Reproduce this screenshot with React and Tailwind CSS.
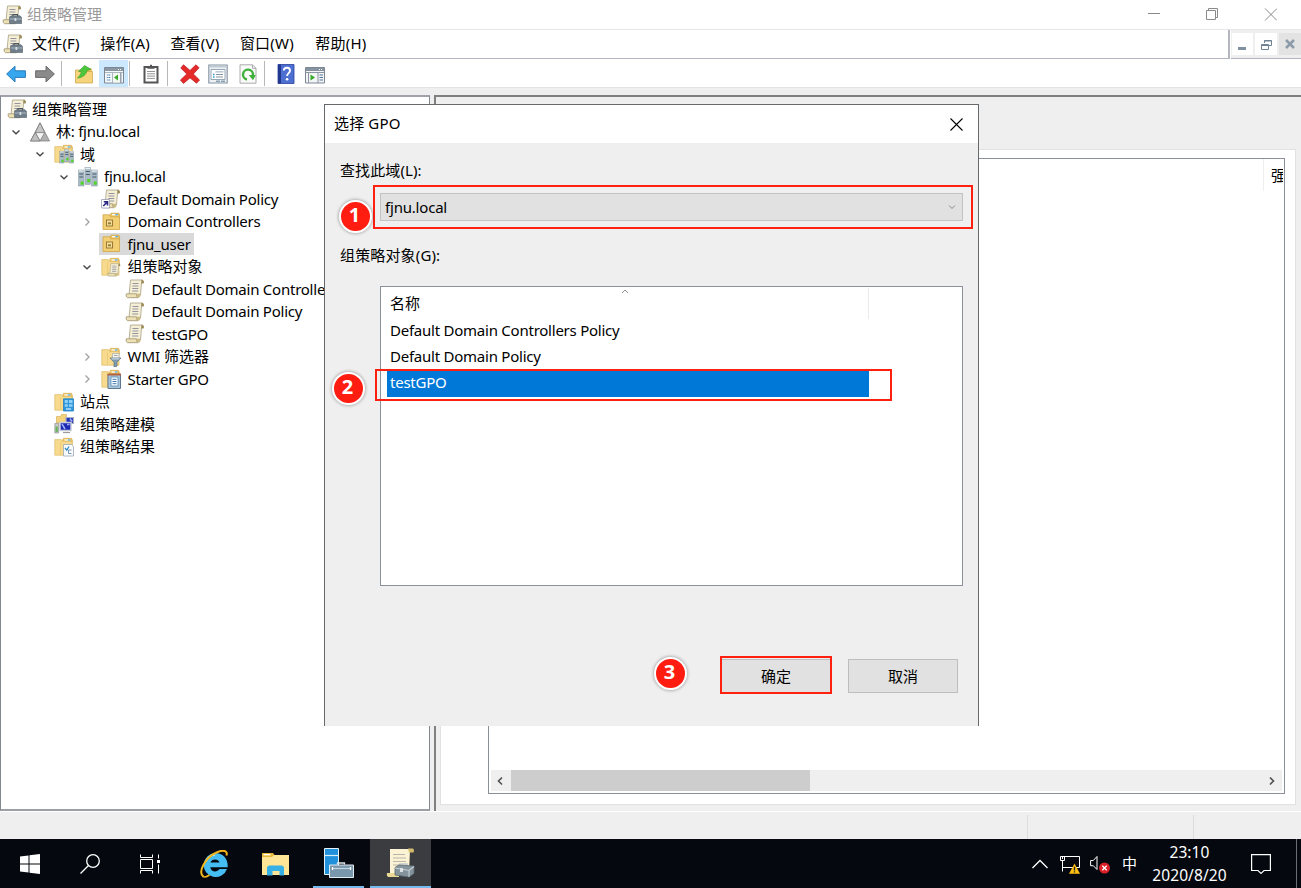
import React from 'react';

/* ---------- ICONS ---------- */

function ScrollShape() {
  return (
    <g>
      <path d="M5.500 1H16.500c1.800 0 2.300 1.200 2 3h-2L15.500 16H4z" fill="#f5efd6" stroke="#b0a88e" strokeWidth=".9" />
      <path d="M16.500.8c1.900 0 2.500 1.400 2.200 3.400h-2.500c0-1.400 0-2.400.3-3.400z" fill="#9c8a56" />
      <path d="M1.300 14.800h10.200c-.4 1.600.2 3.300 1.600 3.900H2.600c-1.400-.6-1.700-2.300-1.300-3.900z" fill="#ece0b4" stroke="#a89c78" strokeWidth=".9" />
      <path d="M11.500 14.800c-.4 1.600.2 3.400 1.600 3.900 2 0 2.400-1.400 2.600-3.900z" fill="#c9ba86" />
      <path d="M7.500 4.500h6M7.400 7h6M7.300 9.500h6M7.200 12h6" stroke="#96939f" strokeWidth="1.100" />
    </g>
  );
}

function FolderShape() {
  return (
    <g>
      <path d="M8.500 3.500l1-2.200h8l.8 2v4H8.500z" fill="#efc35c" stroke="#d3a544" strokeWidth=".6" />
      <path d="M10.500 2.300h6v1.300h-6z" fill="#fff" />
      <path d="M13.800 2.300h2.700v1.300h-2.700z" fill="#56aee0" />
      <path d="M.8 2.600h6.500l1.400 1.900H18v13.700H.8z" fill="#f7da8e" stroke="#e0bd69" strokeWidth=".7" />
      <path d="M6.500 5.500v12.400" stroke="#e8c674" strokeWidth=".8" />
    </g>
  );
}

function Servers() {
  return (
    <g>
      {[[0.4, 3, 16], [13.6, 3, 16], [7, 0.5, 17]].map(([x, y, h]) => (
        <g key={x}>
          <rect x={x} y={y} width="5.600" height={h} fill="#a9bbc6" stroke="#8496a2" strokeWidth=".5" />
          <path d={`M${x + 0.3} ${y + 1}h5`} stroke="#e4edf2" strokeWidth="1.300" />
          <path d={`M${x + 0.8} ${y + 4}h4M${x + 0.8} ${y + 7}h4`} stroke="#4b5c69" strokeWidth="1.200" />
          <rect x={x + 2.2} y={y + 11.500} width="3" height="3.200" fill="#4fd626" />
        </g>
      ))}
    </g>
  );
}

function Icon({ name, className = 'w-5 h-5' }) {
  return (
    <svg viewBox="0 0 20 20" className={`shrink-0 ${className}`} fill="none">
      {name === 'gpm' && (
        <g>
          <ScrollShape />
          <path d="M11 11.300V9.500h4.500v1.800" stroke="#4c545c" strokeWidth="1.200" />
          <path d="M7.500 12.200l2-1.400h8.500l1.700 1.700v6H7.500z" fill="#6f7e8a" stroke="#56616b" strokeWidth=".6" />
          <path d="M7.800 14h11.700" stroke="#b4c2cc" strokeWidth=".9" />
          <path d="M12.500 13h1.800v3h-1.800z" fill="#d5dce0" />
        </g>
      )}
      {name === 'gpo' && <ScrollShape />}
      {name === 'link' && (
        <g>
          <ScrollShape />
          <path d="M.5 10.500h8v8.500h-8z" fill="#fff" stroke="#9a9ab4" strokeWidth=".8" />
          <path d="M2.300 17l3.600-3.800M2.800 12.700h3.700v3.800" stroke="#2a2484" strokeWidth="1.600" />
        </g>
      )}
      {name === 'forest' && (
        <g stroke="#777" strokeWidth=".7" strokeLinejoin="round">
          <path d="M10 .8L19.500 19H.5z" fill="#b0b0b0" />
          <path d="M10 .8l4.700 9.800H5.300z" fill="#c6c6c6" />
          <path d="M5.300 10.600h9.400L10 19z" fill="#f4f4f4" />
          <path d="M5.300 10.600L10 19H.5z" fill="#c0c0c0" />
        </g>
      )}
      {name === 'servers' && <Servers />}
      {name === 'domains' && (
        <g>
          <FolderShape />
          <g transform="translate(5.500 5) scale(.74)"><Servers /></g>
        </g>
      )}
      {name === 'ou' && (
        <g>
          <path d="M9 3.500l1-2.300h8l.6 2v3H9z" fill="#eec460" stroke="#c99f3e" strokeWidth=".7" />
          <path d="M11 2h6v1.300h-6z" fill="#fff" />
          <path d="M14.300 2H17v1.300h-2.700z" fill="#56aee0" />
          <path d="M2 2.800h6.500l1.200 2h8.800v12.700H2z" fill="#f3cf74" stroke="#cfa548" strokeWidth=".8" />
          <path d="M5.500 8h6v6h-6z" fill="#f8e3a2" stroke="#9b7a35" strokeWidth="1.100" />
          <path d="M7 10.300h3v2H7z" fill="#9b7a35" />
        </g>
      )}
      {name === 'gpofolder' && (
        <g>
          <FolderShape />
          <g transform="translate(6 6) scale(.7)"><ScrollShape /></g>
        </g>
      )}
      {name === 'wmi' && (
        <g>
          <FolderShape />
          <path d="M11.500 6.500h6.500v5h-6.500z" fill="#f4f2ec" stroke="#aaa" strokeWidth=".7" />
          <path d="M13 8.500h3.500" stroke="#8f8c96" strokeWidth=".8" />
          <path d="M9 11h11l-4 4.200v4l-3 .8v-4.800z" fill="#7f9bb2" stroke="#5b7180" strokeWidth=".7" />
          <path d="M10.500 11.900h8" stroke="#dbe8f0" strokeWidth="1" />
        </g>
      )}
      {name === 'starter' && (
        <g>
          <FolderShape />
          <path d="M7 5.500h12.500v14H7z" fill="#a9c4d8" stroke="#5e7891" strokeWidth="1" />
          <path d="M6.500 4.500h13.500v2H6.500z" fill="#b3603f" />
          <path d="M10 8h7v9h-7z" fill="#fff" stroke="#5d92bd" strokeWidth=".9" />
          <path d="M11.500 10.300h4M11.500 12.500h4M11.500 14.700h4" stroke="#3e75ad" strokeWidth="1" />
        </g>
      )}
      {name === 'sites' && (
        <g>
          <FolderShape />
          <path d="M9.500 6.800h10V19h-10z" fill="#2f98dd" stroke="#1f7fc4" strokeWidth=".8" />
          <path d="M10.800 8h3v3h-3zM15 8h3.500v3H15zM10.800 12.200h3v2.600h-3zM15 12.200h3.500v2.600H15z" fill="#8fd0f6" />
          <path d="M12 17h5" stroke="#d7effc" strokeWidth="1.200" />
        </g>
      )}
      {name === 'modeling' && (
        <g>
          <path d="M2.500 2.500h4l1-2h5V9h-10z" fill="#f3d27b" stroke="#d0a94e" strokeWidth=".6" />
          <path d="M12 3.500h7.500v6H12z" fill="#2633b8" stroke="#a9b0c4" strokeWidth="1.200" />
          <path d="M6 8.500h11v8H6z" fill="#1c29b5" stroke="#c8cddb" strokeWidth="1.500" />
          <path d="M8 10l3 5M13 10.500h2.500M16 4.500l2 3" stroke="#9fb0f4" strokeWidth="1.500" />
          <path d="M9 18.500h7" stroke="#999" strokeWidth="1.200" />
          <path d="M.8 9.500h3.700V19H.8z" fill="#c5c9cb" stroke="#888" strokeWidth=".6" />
          <path d="M1.500 12.500h2.300V18H1.500z" fill="#6ab45a" />
        </g>
      )}
      {name === 'results' && (
        <g>
          <FolderShape />
          <path d="M9.500 7.500h8l2 2V19h-10z" fill="#fcfcff" stroke="#9aa8b8" strokeWidth=".8" />
          <path d="M11 11l1.800 2.200L15 9.500" stroke="#2d8cc4" strokeWidth="1.300" />
          <path d="M14.500 13h3M14.500 13v3.500h3" stroke="#6d98b5" strokeWidth="1" />
        </g>
      )}
      {name === 'back' && (
        <path d="M.6 10L9 2.200v4.600h10.400v6.600H9V18z" fill="#36a6ee" stroke="#2a7cb9" strokeWidth="1" strokeLinejoin="round" />
      )}
      {name === 'forward' && (
        <path d="M19.400 10L11 2.200v4.600H.6v6.600H11V18z" fill="#8b8b8b" stroke="#6b6b6b" strokeWidth="1" strokeLinejoin="round" />
      )}
      {name === 'up' && (
        <g>
          <path d="M10 4.500h8v4h-8z" fill="#edc563" />
          <path d="M1.500 6h7l1 1.500h9V19h-17z" fill="#f5d47c" stroke="#cda94f" strokeWidth=".8" />
          <path d="M3.500 14c2.200-1.800 3.500-4 3.800-6.500H4.500L10.500 1.500l6.500 3.800-4 1.200c-.7 4-4.200 7.300-9.500 7.500z" fill="#4cc63a" stroke="#379b2c" strokeWidth=".6" />
        </g>
      )}
      {name === 'pane-left' && (
        <g>
          <path d="M.5 2.500h19v15.500H.5z" fill="#f6f9fb" stroke="#7c8792" />
          <path d="M1 3h18v3H1z" fill="#8a97a4" />
          <path d="M14 4.500h1M16 4.500h1" stroke="#fff" strokeWidth="1" />
          <path d="M1 7.500h18M8.500 8v10" stroke="#98a3ad" strokeWidth=".8" />
          <path d="M2.800 10h3.500M2.800 12.500h3.500M2.800 15h3.500" stroke="#4c81ae" strokeWidth="1.100" strokeDasharray="1 .6 2" />
          <path d="M9 8h7v9.500H9z" fill="#f3f9f0" />
          <path d="M14 9.500v6l-4-3z" fill="#38a928" />
          <path d="M16.800 7.800v10" stroke="#8f9aa5" strokeWidth="1.400" />
        </g>
      )}
      {name === 'pane-right' && (
        <g>
          <path d="M.5 2.500h19v15.500H.5z" fill="#f2f4f5" stroke="#7c8792" />
          <path d="M1 3h18v3H1z" fill="#8793a0" />
          <path d="M14 4.500h1M16 4.500h1" stroke="#fff" strokeWidth="1" />
          <path d="M1 7.500h18M3.500 8v10M13 8v10" stroke="#7f8b97" strokeWidth=".9" />
          <path d="M5.500 9.500v6l4.500-3z" fill="#38a928" />
          <path d="M14.500 10h3.500M14.500 12.500h3.500M14.500 15h3.500" stroke="#52779c" strokeWidth="1.200" />
        </g>
      )}
      {name === 'clipboard' && (
        <g>
          <path d="M3.500 3h13v15.500h-13z" fill="#fff" stroke="#555" strokeWidth="2" />
          <path d="M6.500 2h2.300l.4-1.200h1.600l.4 1.200h2.300v2.800h-7z" fill="#555" />
          <path d="M6 7.500h8M6 9.800h8M6 12.100h8M6 14.400h8" stroke="#888" strokeWidth=".9" />
        </g>
      )}
      {name === 'delete' && (
        <path d="M3.500.8L10 6.500 16 .8l3 3L13.300 10l6.200 6-3 3.200-6.500-5.400-6.500 5.600-3-3.400L6.800 10 .8 4z" fill="#e52a2a" stroke="#c21c1c" strokeWidth=".8" strokeLinejoin="round" />
      )}
      {name === 'properties' && (
        <g>
          <path d="M.8 1h18.400v18H.8z" fill="#eef2f5" stroke="#8292a1" strokeWidth="1.100" />
          <path d="M1.500 2.800h17" stroke="#c3ccd4" strokeWidth="1.600" />
          <path d="M3 5.500h14v10H3z" fill="#fff" stroke="#7e92a5" strokeWidth=".8" />
          <path d="M7.500 7h8v1.600h-8z" fill="#bccad6" />
          <path d="M5 10.500h1.500M5 13h1.500" stroke="#2e9bc8" strokeWidth="1.300" />
          <path d="M8 10.500h7M8 13h7" stroke="#8493a0" strokeWidth="1" />
          <path d="M8 17.300h4M13 17.300h4" stroke="#8ba0b1" strokeWidth="1.500" />
        </g>
      )}
      {name === 'refresh' && (
        <g>
          <path d="M2 .8h12.500L18 4.300v14.900H2z" fill="#fafafa" stroke="#a3a3a3" strokeWidth=".9" />
          <path d="M14.500.8v3.500H18" stroke="#a3a3a3" strokeWidth=".9" />
          <path d="M9 15.500A5 5 0 1 1 15 11" stroke="#3fb03b" strokeWidth="2.400" />
          <path d="M17.800 11h-7l4.200 5.200z" fill="#3fb03b" />
        </g>
      )}
      {name === 'help' && (
        <g>
          <path d="M2 .5h16v19H2z" fill="#4d6fd2" stroke="#27409a" strokeWidth=".8" />
          <path d="M2 .5h3v19H2z" fill="#22388f" />
          <path d="M7.800 6.500c.2-3.800 6.300-3.500 6.200.2 0 2.400-2.900 2.500-2.900 5.300" stroke="#fff" strokeWidth="1.900" />
          <circle cx="11.100" cy="15.200" r="1.300" fill="#fff" />
        </g>
      )}
    </svg>
  );
}

function Chevron({ open }) {
  return (
    <svg viewBox="0 0 10 10" className="w-2.5 h-2.5" fill="none">
      {open ? (
        <path d="M1.500 3.500L5 6.800l3.500-3.300" stroke="#444" strokeWidth="1.300" />
      ) : (
        <path d="M3.500 1.500L7 5 3.500 8.500" stroke="#a0a0a0" strokeWidth="1.300" />
      )}
    </svg>
  );
}

/* ---------- TREE ---------- */

const indents = ['pl-[6px]', 'pl-[5px]', 'pl-[29px]', 'pl-[53px]', 'pl-[76px]', 'pl-[100px]'];

const tree = [
  { level: 0, icon: 'gpm', text: '组策略管理', cjk: true },
  { level: 1, icon: 'forest', text: '林: fjnu.local', open: true },
  { level: 2, icon: 'domains', text: '域', open: true, cjk: true },
  { level: 3, icon: 'servers', text: 'fjnu.local', open: true },
  { level: 4, icon: 'link', text: 'Default Domain Policy' },
  { level: 4, icon: 'ou', text: 'Domain Controllers', open: false },
  { level: 4, icon: 'ou', text: 'fjnu_user', selected: true },
  { level: 4, icon: 'gpofolder', text: '组策略对象', open: true, cjk: true },
  { level: 5, icon: 'gpo', text: 'Default Domain Controllers Policy' },
  { level: 5, icon: 'gpo', text: 'Default Domain Policy' },
  { level: 5, icon: 'gpo', text: 'testGPO' },
  { level: 4, icon: 'wmi', text: 'WMI 筛选器', open: false, cjk: true },
  { level: 4, icon: 'starter', text: 'Starter GPO', open: false },
  { level: 2, icon: 'sites', text: '站点', cjk: true },
  { level: 2, icon: 'modeling', text: '组策略建模', cjk: true },
  { level: 2, icon: 'results', text: '组策略结果', cjk: true },
];

function TreeRow({ item }) {
  return (
    <div className={`flex items-center h-[22.53px] ${indents[item.level]}`}>
      {item.level > 0 && (
        <div className="w-6 pl-[5px] shrink-0">{item.open !== undefined && <Chevron open={item.open} />}</div>
      )}
      <div
        className={`flex items-center h-[22px] pr-[3px] -ml-0.5 pl-0.5 ${item.level > 3 ? 'gap-[6.500px]' : item.level ? 'gap-1.5' : 'gap-[5px]'} ${item.selected ? 'bg-[#d9d9d9]' : ''}`}
      >
        <Icon name={item.icon} />
        <span className={`whitespace-nowrap pb-px ${item.cjk ? 'tracking-normal' : 'tracking-[-0.24px]'}`}>{item.text}</span>
      </div>
    </div>
  );
}

/* ---------- TOP BARS ---------- */

function TitleBar() {
  return (
    <div className="h-[30px] flex items-center border-b border-[#e5e5e5] pl-[2px] pr-[24px] text-[#999] tracking-normal">
      <Icon name="gpm" />
      <span className="ml-[5px] pb-0.5">组策略管理</span>
      <svg viewBox="0 0 130 14" className="ml-auto w-[130px] h-3.5 mb-px" fill="none" stroke="#8a8a8a">
        <path d="M1 6.500h12M59.500 3.500h9v9h-9zM61.500 3.500v-2h9v9h-2M118 1.500l12 12M130 1.500l-12 12" />
      </svg>
    </div>
  );
}

function MenuBar() {
  return (
    <div className="h-[29px] flex">
      <div className="flex-1 flex items-center gap-[20.5px] pl-[3px] border-b border-r-2 border-[#b3b6c0] tracking-[0.2px]">
        <div className="flex items-center gap-[9px]">
          <Icon name="gpm" />
          <span className="pb-0.5">文件(F)</span>
        </div>
        <span className="pb-0.5">操作(A)</span>
        <span className="pb-0.5">查看(V)</span>
        <span className="pb-0.5">窗口(W)</span>
        <span className="pb-0.5 ml-px">帮助(H)</span>
      </div>
      <div className="w-[70px] ml-px border-b border-[#b3b6c0] flex pt-[3px] pb-[3px] bg-[#efefef] gap-0.5 pl-px">
        <div className="w-[21px] bg-white flex justify-center">
          <div className="w-2 h-[3px] bg-[#8090a0] mt-3.5 mr-0.5" />
        </div>
        <div className="w-[22px] bg-white flex justify-center items-center">
          <svg viewBox="0 0 11 11" className="w-[11px] h-[11px]" fill="none" stroke="#718494">
            <path d="M3.500 4V1.500h7v5H8M3 2h8M.5 5.500h7v5h-7zM0 6.500h8" />
          </svg>
        </div>
        <div className="flex-1 bg-[#e3e3e3] flex justify-center items-center">
          <svg viewBox="0 0 10 10" className="w-2.5 h-2.5" fill="none" stroke="#8b9baa" strokeWidth="2.500">
            <path d="M1 1l8 8M9 1L1 9" />
          </svg>
        </div>
      </div>
    </div>
  );
}

function Divider({ className }) {
  return <div className={`w-px h-[25px] bg-[#b8b8b8] ${className}`} />;
}

function Toolbar() {
  return (
    <div className="h-[29px] flex items-center border-b border-[#e3e3e3] pl-1.5 pt-px">
      <Icon name="back" />
      <Icon name="forward" className="w-5 h-5 ml-[9px]" />
      <Divider className="ml-1.5" />
      <Icon name="up" className="w-5 h-5 ml-3" />
      <div className="w-[29px] h-[27px] ml-[5px] bg-[#cce8ff] flex items-center justify-center">
        <Icon name="pane-left" className="w-5 h-5 mt-0.5" />
      </div>
      <Divider className="ml-px" />
      <Icon name="clipboard" className="w-5 h-5 ml-[11px]" />
      <Divider className="ml-1.5" />
      <Icon name="delete" className="w-5 h-5 ml-3" />
      <Icon name="properties" className="w-5 h-5 ml-2" />
      <Icon name="refresh" className="w-5 h-5 ml-2.5" />
      <Divider className="ml-1.5" />
      <Icon name="help" className="w-5 h-5 ml-[11px]" />
      <Icon name="pane-right" className="w-5 h-5 ml-[9px] mt-0.5" />
    </div>
  );
}

/* ---------- RIGHT PANEL ---------- */

function ContentPanel() {
  return (
    <div className="flex-1 border-t-2 border-l-2 border-[#808080] ml-1 pt-[52px] pl-1 pr-[5px] pb-1.5 bg-[#efefef]">
      <div className="h-full bg-white border border-[#e1e1e1] pt-2 pl-[47px] pr-2.5 pb-2.5">
        <div className="h-full border border-[#8b8f98] flex flex-col overflow-hidden">
          <div className="h-8 flex justify-end">
            <div className="w-[21px] border-l border-[#efefef] pl-[7px] pt-[6px] pr-px">
              <div className="overflow-hidden whitespace-nowrap">强</div>
            </div>
          </div>
          <div className="flex-1" />
          <div className="h-[21px] mb-0.5 mx-0.5 flex items-center bg-[#efefef]">
            <div className="w-5 flex justify-center">
              <svg viewBox="0 0 10 10" className="w-2.5 h-2.5 mr-0.5" fill="none" stroke="#505050" strokeWidth="1.600">
                <path d="M7 1.500L3.500 5 7 8.500" />
              </svg>
            </div>
            <div className="w-[299px] h-full bg-[#cdcdcd]" />
            <div className="ml-auto w-[21px] flex justify-center">
              <svg viewBox="0 0 10 10" className="w-2.5 h-2.5" fill="none" stroke="#505050" strokeWidth="1.600">
                <path d="M3 1.500L6.500 5 3 8.500" />
              </svg>
            </div>
          </div>
        </div>
      </div>
    </div>
  );
}

/* ---------- DIALOG ---------- */

function Dialog() {
  return (
    <div className="absolute left-[324px] top-[104px] w-[655px] h-[622px] border border-b-0 border-[#66696c] bg-[#efefef]">
      <div className="h-[38px] bg-white flex items-center justify-between pl-[9px] pr-[15px]">
        <span className="pb-0.5 tracking-[0.15px]">选择 GPO</span>
        <svg viewBox="0 0 13 13" className="w-[13px] h-[13px]" stroke="#000" strokeWidth="1.100">
          <path d="M.5.5l12 12M12.500.5l-12 12" />
        </svg>
      </div>
      <div className="pl-[15px] pr-[15px] pt-[17px]">
        <div className="h-5 leading-5 tracking-[0.1px]">查找此域(L):</div>
        <div className="ml-10 mt-[13px] h-[28px] border border-[#c3c3c3] bg-[#e1e1e1] flex items-center justify-between pl-1 pr-1.5">
          <span>fjnu.local</span>
          <svg viewBox="0 0 8 8" className="w-2 h-2" fill="none" stroke="#888">
            <path d="M1 2.500l3 3 3-3" />
          </svg>
        </div>
        <div className="h-5 leading-5 mt-6 tracking-[0.15px]">组策略对象(G):</div>
        <div className="ml-10 mt-[21px] h-[300px] border border-[#8b9199] bg-white pt-px pl-1.5">
          <div className="h-[30.5px] w-[482px] border-r border-[#ebebeb] flex items-center pl-[3px] pb-px relative tracking-normal">
            名称
            <svg viewBox="0 0 8 5" className="absolute left-[234px] top-px w-2 h-[5px]" fill="none" stroke="#909090">
              <path d="M1 4l3-3 3 3" />
            </svg>
          </div>
          {['Default Domain Controllers Policy', 'Default Domain Policy', 'testGPO'].map((name) => (
            <div
              key={name}
              className={`h-[26.2px] w-[482px] flex items-center pl-[3px] pb-[3px] tracking-[-0.24px] ${name === 'testGPO' ? 'bg-[#0078d7] text-white' : ''}`}
            >
              {name}
            </div>
          ))}
        </div>
        <div className="flex justify-end gap-[17px] mt-[73px] pr-[5px] tracking-normal">
          <div className="w-[110px] h-[34px] border border-[#bdbdbd] bg-[#e1e1e1] flex items-center justify-center">确定</div>
          <div className="w-[110px] h-[34px] border border-[#bdbdbd] bg-[#e1e1e1] flex items-center justify-center">取消</div>
        </div>
      </div>
    </div>
  );
}

function StepBadge({ n, className }) {
  return (
    <div
      className={`absolute w-[33px] h-[33px] rounded-full border-2 border-white bg-[#ff1d12] shadow-[0_0_3px_1px_rgba(0,0,0,0.25)] text-white font-bold text-[20px] leading-[26px] text-center tracking-normal pr-0.5 ${className}`}
    >
      {n}
    </div>
  );
}

/* ---------- TASKBAR ---------- */

function Taskbar() {
  return (
    <div className="h-[49px] bg-[#05090f] text-white flex items-stretch">
      <div className="w-[60px] flex items-center justify-center">
        <svg viewBox="0 0 20 20" className="w-5 h-5" fill="#fff">
          <path d="M0 2.600l8.500-1.200V9.500H0zM9.500 1.200L20 0v9.500H9.500zM0 10.500h8.500v8.100L0 17.400zM9.500 10.500H20V20L9.500 18.800z" />
        </svg>
      </div>
      <div className="w-[60px] flex items-center justify-center">
        <svg viewBox="0 0 20 20" className="w-5 h-5" fill="none" stroke="#fff" strokeWidth="1.300">
          <circle cx="13" cy="7" r="6.300" />
          <path d="M8.500 11.500L.5 19.500" />
        </svg>
      </div>
      <div className="w-[60px] flex items-center justify-center">
        <svg viewBox="0 0 20 20" className="w-5 h-5" fill="none" stroke="#fff">
          <path d="M.5.500v3h12v-3M.5 19.500v-3h12v3M.5 5.500h12v9H.5zM18.500.500v4M18.500 10.500v9" />
          <path d="M17 6h3v3h-3z" fill="#fff" stroke="none" />
        </svg>
      </div>
      <div className="w-[67px] flex items-center justify-center">
        <svg viewBox="0 0 28 28" className="w-7 h-7" fill="none">
          <path d="M15 3a12 12 0 1 0 12 16h-7.500c-2.400 3.800-8.700 3-9.200-1.800h17.400C28.200 8.500 23 3 15 3zm-4.500 9.400c1-4 8-4 9 0z" fill="#45bdf2" />
          <path d="M15 5a9.600 9.600 0 0 0-9 6.500" stroke="#b5eafd" strokeWidth="1.500" />
          <path d="M3.500 26.800C-3 22 6 7.500 15.500 3 23-.8 28 .5 26.500 5.500" stroke="#f2b71c" strokeWidth="2" />
          <path d="M2.800 26.300c1.700 1.200 4.200.5 6.700-1.300" stroke="#f2b71c" strokeWidth="1.600" />
        </svg>
      </div>
      <div className="w-[57px] flex items-center justify-center">
        <svg viewBox="0 0 27 24" className="w-[27px] h-6">
          <path d="M0 1h11l1.500 2H26v4H0z" fill="#e9b93a" />
          <path d="M1.500 2h7v1.300h-7z" fill="#fff" />
          <path d="M0 5h10l2-2h15v20H0z" fill="#ffe596" />
          <path d="M5 23.500V15l2-1.500h13l2 1.500v8.500h-4.500V19h-7v4.500z" fill="#37b0e6" />
        </svg>
      </div>
      <div className="w-[51px] ml-[9px] flex items-center justify-center border-b-2 border-[#76b9ed]">
        <svg viewBox="0 0 30 30" className="w-[30px] h-[30px]">
          <path d="M.5.500h14v26H.5z" fill="#2191dc" stroke="#e6f3fb" />
          <path d="M.5 7.500h14" stroke="#d5edfb" strokeWidth="1.200" />
          <path d="M13.500 16.500v-1.500h7v1.500" fill="none" stroke="#dfe7ec" strokeWidth="1.300" />
          <path d="M5.500 17h24v12.500h-24z" fill="#7896ac" stroke="#e3ebf0" />
          <path d="M8 20.500h19" stroke="#c2d4e0" strokeWidth="1.200" />
          <path d="M8.500 19v3M26.500 19v3" stroke="#fff" strokeWidth="1.300" />
        </svg>
      </div>
      <div className="w-[61px] ml-1.5 flex items-center justify-center bg-[#3a3c40] border-b-2 border-[#76b9ed]">
        <svg viewBox="0 0 30 30" className="w-[30px] h-[30px]" fill="none">
          <path d="M4 1h20l-1 25H4z" fill="#fbf3d3" />
          <path d="M22 .5h4c2.500 0 2 2.500 1.500 4H23z" fill="#d5bb70" />
          <path d="M1 25h12v4H2.500C.8 28.500.5 26.500 1 25z" fill="#ead994" />
          <path d="M7 6.500h12M7 10h13M7 13.500h13M7 17h7" stroke="#b9b5ab" strokeWidth="1.100" />
          <path d="M14 18v-2h7v2" stroke="#c2cbd0" strokeWidth="1.500" />
          <path d="M9 19.500l4-2.500 15 1v7.500l-5 3.500L9 27z" fill="#85939c" stroke="#5c6871" strokeWidth=".8" />
          <path d="M9 20l14 2.500 5-4M23 22.500V29" stroke="#c4ced4" strokeWidth="1.100" />
          <path d="M14 20h3v4h-3z" fill="#dae0e4" />
        </svg>
      </div>
      <div className="ml-auto flex items-center">
        <svg viewBox="0 0 16 10" className="w-4 h-2.5" fill="none" stroke="#fff" strokeWidth="1.300">
          <path d="M.5 9L8 1.500 15.500 9" />
        </svg>
        <svg viewBox="0 0 20 20" className="w-5 h-5 ml-3" fill="none" stroke="#fff">
          <path d="M4 2.500h15.500v11H5.500M2.500 7v10.500M2.500 13.500H9" />
          <path d="M.5 2.500h4v4h-4zM2.500 3v2" />
          <path d="M14.500 9.500l5.500 10.200H9z" fill="#fdbe12" stroke="none" />
          <path d="M14.500 12.800v3.700M14.500 17.300v1.300" stroke="#222" strokeWidth="1.300" />
        </svg>
        <svg viewBox="0 0 20 20" className="w-5 h-5 ml-2.5" fill="none">
          <path d="M.6 6.500h2.700L7 2.500v13l-3.700-3.800H.6z" stroke="#fff" />
          <circle cx="14.500" cy="14" r="5.500" fill="#dc2029" />
          <path d="M12.300 11.800l4.400 4.400M16.700 11.800l-4.400 4.400" stroke="#fff" strokeWidth="1.300" />
        </svg>
        <span className="ml-3 w-[15px] pb-px">中</span>
        <div className="ml-[15px] w-[75px] text-center leading-[23px] text-[15.5px] tracking-[0.1px] whitespace-nowrap">
          <div>23:10</div>
          <div>2020/8/20</div>
        </div>
        <svg viewBox="0 0 20 20" className="w-5 h-5 ml-6" fill="none" stroke="#fff" strokeWidth="1.200">
          <path d="M.6.600h18.800v15.900H13l-3 2.900-3-2.900H.6z" />
        </svg>
        <div className="ml-[25px] w-px h-[49px] bg-[#6a6d70] mr-1" />
      </div>
    </div>
  );
}

function App() {
  return (
    <div className="relative w-[1301px] h-[888px] overflow-hidden flex flex-col bg-white text-black text-[15px] leading-5 font-['Noto_Sans','Noto_Sans_CJK_SC',sans-serif] tracking-[-0.2px]">
      <TitleBar />
      <MenuBar />
      <Toolbar />

      {/* MAIN AREA */}
      <div className="h-[723px] pt-[7px] bg-[#efefef] flex">
        <div className="w-[430px] border-t-2 border-x border-b-2 border-t-[#a0a3aa] border-[#828790] border-b-[#9c9fa6] bg-white overflow-hidden pt-px">
          {tree.map((item, i) => (
            <TreeRow key={i} item={item} />
          ))}
        </div>
        <ContentPanel />
      </div>

      {/* STATUS BAR */}
      <div className="flex-1 bg-[#efefef] border-t border-white flex justify-end pt-[3px]">
        <div className="w-[166px] border-l border-[#dcdcdc]" />
        <div className="w-[108px] border-l border-[#dcdcdc]" />
      </div>
      <Taskbar />

      <Dialog />

      {/* STEP MARKERS */}
      <div className="absolute left-[373px] top-[185px] w-[600px] h-11 border-2 border-[#ff2010]" />
      <div className="absolute left-[375px] top-[369px] w-[517px] h-8 border-2 border-[#ff2010]" />
      <div className="absolute left-[720px] top-[656px] w-28 h-[38px] border-2 border-[#ff2010]" />
      <StepBadge n="1" className="left-[339px] top-[200px]" />
      <StepBadge n="2" className="left-[332px] top-[372px]" />
      <StepBadge n="3" className="left-[654px] top-[657px]" />
    </div>
  );
}

export default App;
